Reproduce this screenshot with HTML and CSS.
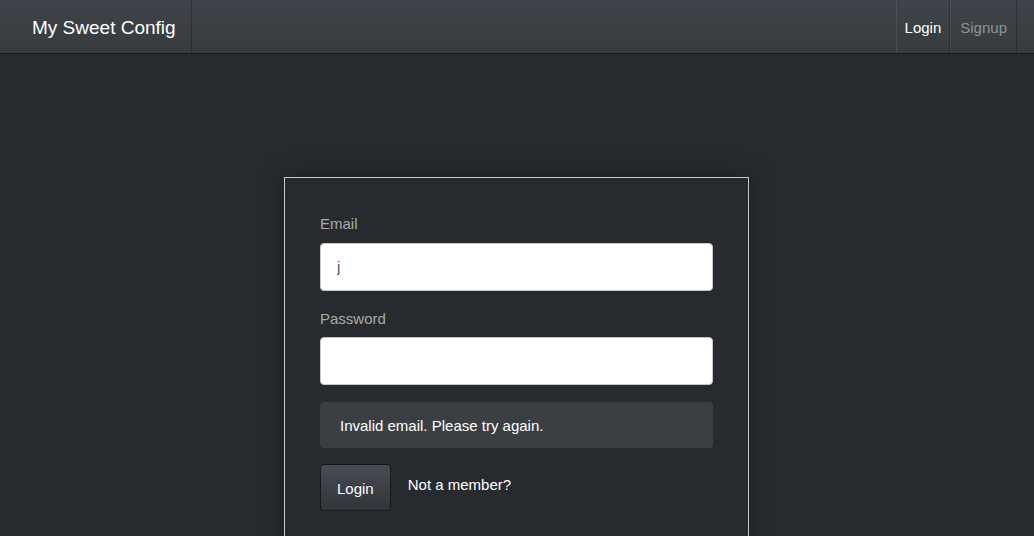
FILE: index.html
```html
<!DOCTYPE html>
<html lang="en">
<head>
<meta charset="utf-8">
<title>My Sweet Config</title>
<link rel="stylesheet" href="styles.css">
</head>
<body>
<nav class="navbar">
  <a class="brand" href="#">My Sweet Config</a>
  <div class="nav">
    <a class="nav-link active" href="#">Login</a>
    <a class="nav-link" href="#">Signup</a>
  </div>
</nav>
<main class="main">
  <form class="card">
    <div class="form-group">
      <label class="label" for="email">Email</label>
      <input class="input" id="email" type="text" value="j">
    </div>
    <div class="form-group">
      <label class="label" for="password">Password</label>
      <input class="input" id="password" type="password">
    </div>
    <div class="alert">Invalid email. Please try again.</div>
    <div class="actions">
      <button class="btn" type="button">Login</button>
      <a class="member" href="#">Not a member?</a>
    </div>
  </form>
</main>
</body>
</html>
```
FILE: styles.css
```css
* { box-sizing: border-box; }
html, body { margin: 0; padding: 0; }
body {
  background: #272b30;
  color: #aaa;
  font-family: "Liberation Sans", Arial, sans-serif;
  font-size: 15px;
  line-height: 1.5;
  height: 536px;
  overflow: hidden;
}
a { text-decoration: none; }

.navbar {
  display: flex;
  justify-content: space-between;
  align-items: stretch;
  height: 54px;
  padding: 0 17px 0 16px;
  background: linear-gradient(#3f444a, #3a3f44 60%, #373b40);
  border-bottom: 1px solid rgba(0,0,0,.6);
}
.brand {
  display: flex;
  align-items: center;
  padding: 3px 15px 0 16px;
  color: #fff;
  font-size: 19px;
  border-right: 1px solid rgba(0,0,0,.22);
}
.nav { display: flex; }
.nav-link {
  display: flex;
  align-items: center;
  padding: 3px 9px 0;
  color: #8f9397;
  border-left: 1px solid rgba(255,255,255,.07);
  border-right: 1px solid rgba(0,0,0,.22);
}
.nav-link.active { color: #fff; padding: 3px 8px 0; }

.main {
  display: flex;
  justify-content: center;
  padding-top: 123px;
}
.card {
  width: 465px;
  margin: 0 0 0 -1px;
  padding: 35px 35px 40px;
  border: 1px solid #c8c8c8;
  background: #272b30;
  box-shadow: 0 0 22px rgba(0,0,0,.35);
}
.form-group { margin-bottom: 17px; }
.label {
  display: block;
  margin-bottom: 7px;
  color: #aaa;
}
.input {
  display: block;
  width: 100%;
  height: 48px;
  padding: 12px 16px;
  font-family: inherit;
  font-size: 15px;
  color: #52575c;
  background: #fff;
  border: 1px solid #c8c8c8;
  border-radius: 4px;
  outline: none;
}
.alert {
  padding: 13px 20px 10px;
  margin-bottom: 16px;
  background: #3a3f44;
  color: #fff;
  border-radius: 4px;
}
.actions {
  display: flex;
  align-items: flex-start;
  gap: 17px;
}
.btn {
  height: 47px;
  padding: 3px 16px 0;
  font-family: inherit;
  font-size: 15px;
  color: #fff;
  background: linear-gradient(#484c53, #3a3e44 60%, #32363b);
  border: 1px solid rgba(0,0,0,.6);
  border-radius: 4px;
  text-shadow: 0 -1px 0 rgba(0,0,0,.3);
}
.member {
  color: #fff;
  padding-top: 10px;
}
```
